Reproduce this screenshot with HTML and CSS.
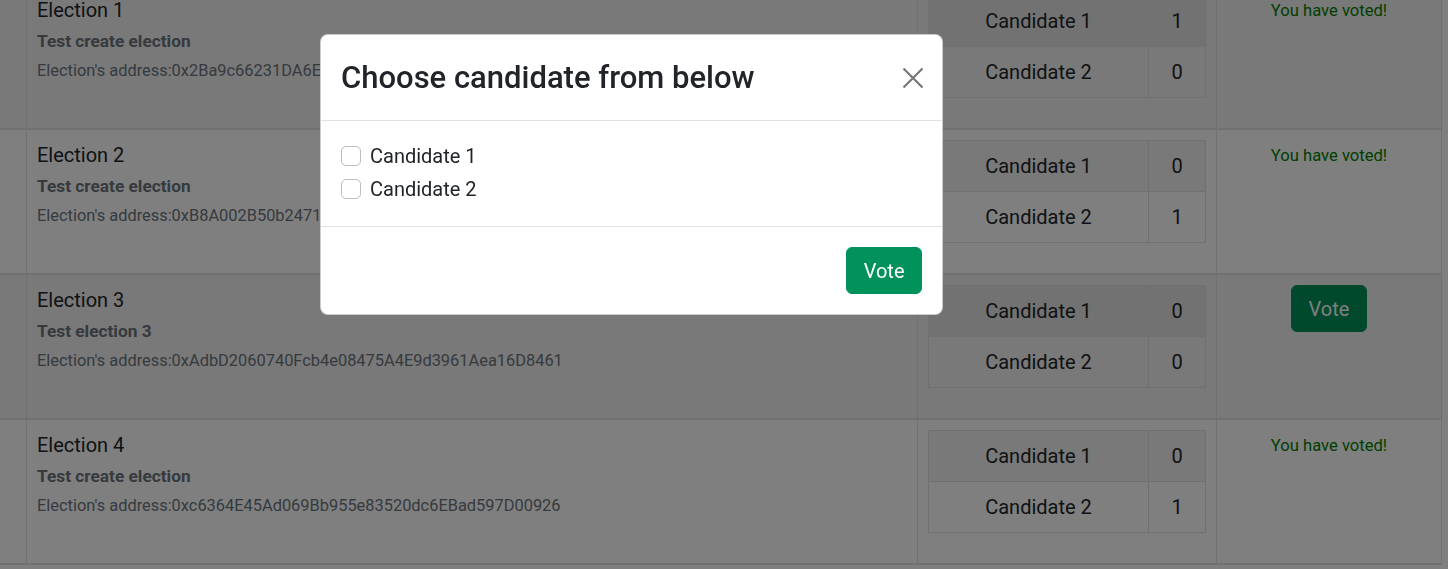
FILE: index.html
```html
<!DOCTYPE html>
<html lang="en">
<head>
<meta charset="utf-8">
<title>Elections</title>
<link rel="stylesheet" href="styles.css">
</head>
<body>
<table class="elections">
  <colgroup>
    <col class="c-idx"><col class="c-info"><col class="c-cands"><col class="c-act">
  </colgroup>
  <tbody>
    <tr class="striped">
      <td class="idx"></td>
      <td class="info">
        <div class="e-title">Election 1</div>
        <div class="e-sub">Test create election</div>
        <div class="e-addr">Election's address:0x2Ba9c66231DA6E7f1b4C0a93d52E8F6a1B3c7D90</div>
      </td>
      <td class="cands">
        <table class="results">
          <tr class="first"><td class="name">Candidate 1</td><td class="count">1</td></tr>
          <tr><td class="name">Candidate 2</td><td class="count">0</td></tr>
        </table>
      </td>
      <td class="act"><div class="voted">You have voted!</div></td>
    </tr>
    <tr>
      <td class="idx"></td>
      <td class="info">
        <div class="e-title">Election 2</div>
        <div class="e-sub">Test create election</div>
        <div class="e-addr">Election's address:0xB8A002B50b2471c9E3f06D5a8b17C2e4F90d3A6B</div>
      </td>
      <td class="cands">
        <table class="results">
          <tr class="first"><td class="name">Candidate 1</td><td class="count">0</td></tr>
          <tr><td class="name">Candidate 2</td><td class="count">1</td></tr>
        </table>
      </td>
      <td class="act"><div class="voted">You have voted!</div></td>
    </tr>
    <tr class="striped">
      <td class="idx"></td>
      <td class="info">
        <div class="e-title">Election 3</div>
        <div class="e-sub">Test election 3</div>
        <div class="e-addr">Election's address:0xAdbD2060740Fcb4e08475A4E9d3961Aea16D8461</div>
      </td>
      <td class="cands">
        <table class="results">
          <tr class="first"><td class="name">Candidate 1</td><td class="count">0</td></tr>
          <tr><td class="name">Candidate 2</td><td class="count">0</td></tr>
        </table>
      </td>
      <td class="act"><button class="btn-vote" type="button">Vote</button></td>
    </tr>
    <tr>
      <td class="idx"></td>
      <td class="info">
        <div class="e-title">Election 4</div>
        <div class="e-sub">Test create election</div>
        <div class="e-addr">Election's address:0xc6364E45Ad069Bb955e83520dc6EBad597D00926</div>
      </td>
      <td class="cands">
        <table class="results">
          <tr class="first"><td class="name">Candidate 1</td><td class="count">0</td></tr>
          <tr><td class="name">Candidate 2</td><td class="count">1</td></tr>
        </table>
      </td>
      <td class="act"><div class="voted">You have voted!</div></td>
    </tr>
  </tbody>
</table>

<div class="backdrop"></div>

<div class="modal">
  <div class="modal-header">
    <div class="modal-title">Choose candidate from below</div>
    <button class="btn-close" type="button" aria-label="Close">
      <svg width="22" height="22" viewBox="0 0 22 22"><path d="M1.5 1.5 L20.5 20.5 M20.5 1.5 L1.5 20.5" stroke="#777" stroke-width="2.2" fill="none"/></svg>
    </button>
  </div>
  <div class="modal-body">
    <label class="check"><span class="box"></span><span>Candidate 1</span></label>
    <label class="check"><span class="box"></span><span>Candidate 2</span></label>
  </div>
  <div class="modal-footer">
    <button class="btn-vote modal-btn" type="button">Vote</button>
  </div>
</div>
</body>
</html>
```

FILE: styles.css
```css
* { box-sizing: border-box; }
html, body { margin: 0; padding: 0; }
body {
  font-family: Roboto, "Liberation Sans", sans-serif;
  font-size: 20px;
  line-height: 1.5;
  color: #212529;
  background: #fff;
  overflow: hidden;
  height: 569px;
}

.elections {
  margin-top: -15px;
  width: 1442px;
  table-layout: fixed;
  border-collapse: separate;
  border-spacing: 0;
}
.c-idx { width: 27px; }
.c-info { width: 891px; }
.c-cands { width: 299px; }
.c-act { width: 225px; }

.elections > tbody > tr > td {
  padding: 10px;
  vertical-align: top;
  border-right: 1px solid #dee2e6;
  border-bottom: 2px solid #dee2e6;
}
.elections > tbody > tr.striped > td { background: #f2f2f2; }
.elections td.idx { padding: 0; }

.e-title { font-size: 20px; line-height: 30px; color: #212529; }
.e-sub { font-size: 17.3px; font-weight: 700; line-height: 24px; margin-top: 4px; color: #6c757d; }
.e-addr { font-size: 16.4px; line-height: 24px; margin-top: 6px; color: #6c757d; }

.results {
  width: 100%;
  border-collapse: collapse;
  margin-bottom: 20px;
}
.results td {
  border: 1px solid #dee2e6;
  padding: 10px;
  line-height: 30px;
  text-align: center;
  color: #212529;
}
.results tr.first td { background: rgba(0,0,0,0.05); }
.results td.count { width: 57px; }

.act { text-align: center; }
.voted { font-size: 16.6px; line-height: 32px; color: #008000; }

.btn-vote {
  font-family: inherit;
  font-size: 20px;
  line-height: 30px;
  padding: 7.5px 16.5px;
  border: 1px solid #00925a;
  border-radius: 6px;
  background: #00925a;
  color: #fff;
}

.backdrop {
  position: fixed;
  inset: 0;
  background: rgba(0,0,0,0.5);
}

.modal {
  position: fixed;
  left: 320px;
  top: 34px;
  width: 623px;
  background: #fff;
  border: 1px solid rgba(0,0,0,0.2);
  border-radius: 8px;
}
.modal-header {
  display: flex;
  align-items: center;
  justify-content: space-between;
  padding: 20px;
  border-bottom: 1px solid #dee2e6;
}
.modal-title {
  font-size: 31px;
  font-weight: 500;
  line-height: 45px;
  color: #212529;
}
.btn-close {
  border: 0;
  background: none;
  padding: 0;
  margin-right: -2px;
  width: 22px;
  height: 22px;
  display: flex;
}
.modal-body {
  padding: 20px;
  border-bottom: 1px solid #dee2e6;
}
.check {
  display: flex;
  align-items: center;
  height: 30px;
  margin-bottom: 2.5px;
  color: #212529;
}
.check .box {
  width: 20px;
  height: 20px;
  border: 1px solid rgba(0,0,0,0.25);
  border-radius: 5px;
  margin-right: 9px;
  flex: none;
}
.modal-footer {
  display: flex;
  justify-content: flex-end;
  padding: 15px;
}
.modal-btn { margin: 5px; }
```
